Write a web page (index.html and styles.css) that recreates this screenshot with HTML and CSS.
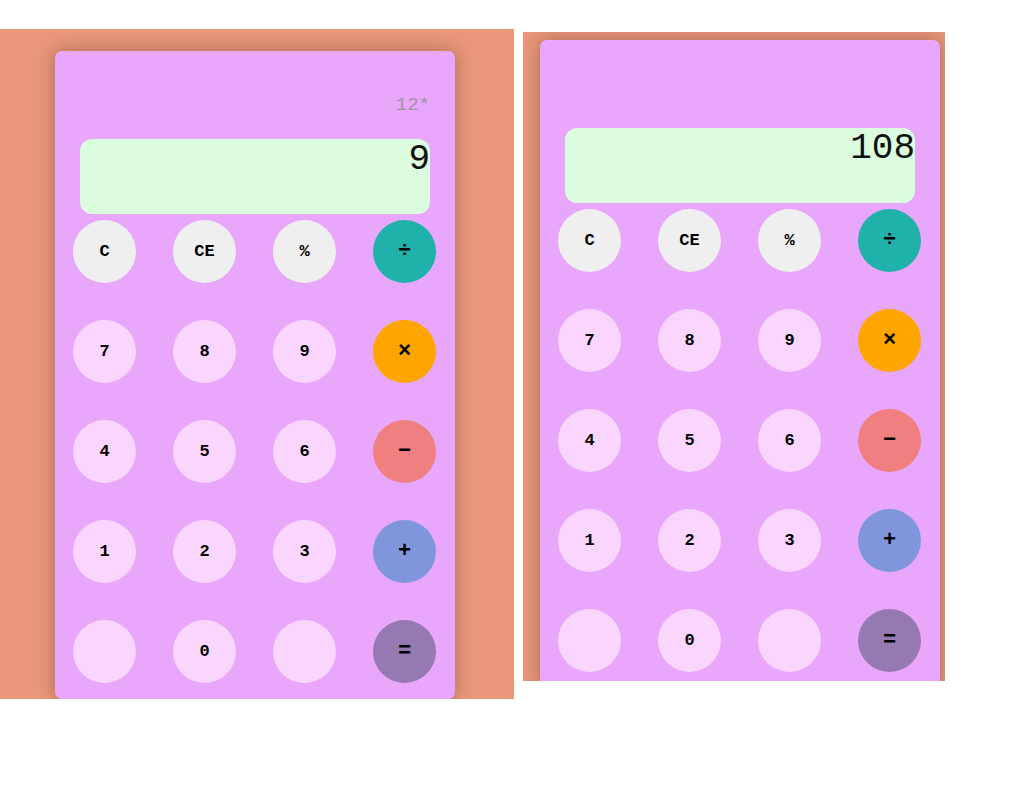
FILE: index.html
```html
<!DOCTYPE html>
<html>
<head>
<meta charset="utf-8">
<link rel="stylesheet" href="styles.css">
</head>
<body>
<div class="page">
  <section class="panel panel-left">
    <div class="calc">
      <div class="history">12*</div>
      <div class="display">9</div>
      <div class="keys">
        <button class="key key-fn">C</button>
        <button class="key key-fn">CE</button>
        <button class="key key-fn">%</button>
        <button class="key key-div">&divide;</button>
        <button class="key key-num">7</button>
        <button class="key key-num">8</button>
        <button class="key key-num">9</button>
        <button class="key key-mul">&times;</button>
        <button class="key key-num">4</button>
        <button class="key key-num">5</button>
        <button class="key key-num">6</button>
        <button class="key key-sub">&minus;</button>
        <button class="key key-num">1</button>
        <button class="key key-num">2</button>
        <button class="key key-num">3</button>
        <button class="key key-add">+</button>
        <button class="key key-num"></button>
        <button class="key key-num">0</button>
        <button class="key key-num"></button>
        <button class="key key-eq">=</button>
      </div>
    </div>
  </section>
  <section class="panel panel-right">
    <div class="calc">
      <div class="history"></div>
      <div class="display">108</div>
      <div class="keys">
        <button class="key key-fn">C</button>
        <button class="key key-fn">CE</button>
        <button class="key key-fn">%</button>
        <button class="key key-div">&divide;</button>
        <button class="key key-num">7</button>
        <button class="key key-num">8</button>
        <button class="key key-num">9</button>
        <button class="key key-mul">&times;</button>
        <button class="key key-num">4</button>
        <button class="key key-num">5</button>
        <button class="key key-num">6</button>
        <button class="key key-sub">&minus;</button>
        <button class="key key-num">1</button>
        <button class="key key-num">2</button>
        <button class="key key-num">3</button>
        <button class="key key-add">+</button>
        <button class="key key-num"></button>
        <button class="key key-num">0</button>
        <button class="key key-num"></button>
        <button class="key key-eq">=</button>
      </div>
    </div>
  </section>
</div>
</body>
</html>
```

FILE: styles.css
```css
html, body {
  margin: 0;
  padding: 0;
  background: #ffffff;
}

.page {
  display: flex;
  align-items: flex-start;
  width: 1013px;
  height: 792px;
  overflow: hidden;
}

.panel {
  background: #e9967a;
  overflow: hidden;
  box-sizing: border-box;
}

.panel-left {
  width: 514px;
  height: 670px;
  margin-top: 29px;
  padding: 22px 0 0 55px;
}

.panel-right {
  width: 422px;
  height: 649px;
  margin-top: 32px;
  margin-left: 9px;
  padding: 8px 0 0 17px;
}

.calc {
  width: 400px;
  height: 648px;
  background: #e8a7fb;
  border-radius: 7px;
  box-shadow: 0 0 18px rgba(0, 0, 0, 0.28);
  font-family: "Liberation Mono", "Courier New", monospace;
}

.history {
  height: 88px;
  box-sizing: border-box;
  padding-top: 43px;
  margin: 0 25px;
  text-align: right;
  font-size: 19px;
  line-height: 23px;
  color: #a093a6;
}

.display {
  height: 75px;
  margin: 0 25px;
  background: #dcfcdf;
  border-radius: 12px;
  text-align: right;
  font-size: 36px;
  line-height: normal;
  color: #111;
}

.keys {
  margin-top: 6px;
  display: grid;
  grid-template-columns: repeat(4, 100px);
  grid-auto-rows: 100px;
  justify-items: start;
  align-items: start;
}

.key {
  width: 63px;
  height: 63px;
  border: none;
  border-radius: 50%;
  padding: 0;
  margin: 0 0 0 18px;
  font-family: "Liberation Mono", "Courier New", monospace;
  font-weight: bold;
  font-size: 17px;
  color: #000;
  display: flex;
  align-items: center;
  justify-content: center;
}

.key-fn { background: #efefef; }
.key-num { background: #fad5fd; }
.key-div { background: #20b2aa; font-size: 22px; }
.key-mul { background: #ffa500; font-size: 22px; }
.key-sub { background: #f08080; font-size: 22px; }
.key-add { background: #7f96dd; font-size: 22px; }
.key-eq { background: #9579b0; font-size: 22px; }
```
